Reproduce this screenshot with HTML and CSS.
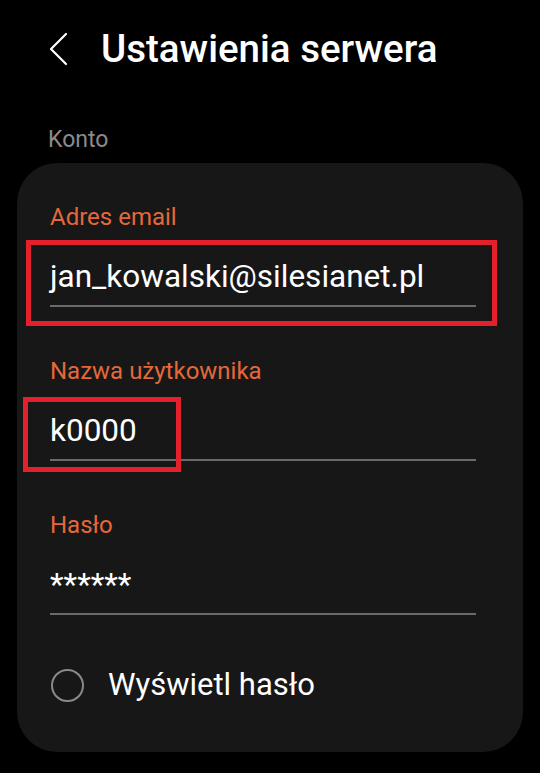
FILE: index.html
```html
<!DOCTYPE html>
<html lang="pl">
<head>
  <meta charset="UTF-8">
  <meta name="viewport" content="width=device-width, initial-scale=1.0">
  <title>Ustawienia serwera</title>
  <link rel="stylesheet" href="styles.css">
</head>
<body>
  <div class="screen">
    <!-- Pasek tytułu -->
    <div class="top-bar">
      <button class="back-button" aria-label="Wstecz">
        <svg width="20" height="34" viewBox="0 0 20 34">
          <path d="M17 2 L2 17 L17 32" fill="none" stroke="#fff" stroke-width="2.2" stroke-linecap="round" stroke-linejoin="round"/>
        </svg>
      </button>
      <h1>Ustawienia serwera</h1>
    </div>

    <div class="section-title">Konto</div>

    <div class="card">
      <div class="field">
        <label class="field-label">Adres email</label>
        <div class="field-value">
          jan_kowalski@silesianet.pl
          <span class="highlight highlight-email"></span>
        </div>
      </div>

      <div class="field">
        <label class="field-label">Nazwa użytkownika</label>
        <div class="field-value">
          k0000
          <span class="highlight highlight-user"></span>
        </div>
      </div>

      <div class="field">
        <label class="field-label">Hasło</label>
        <div class="field-value">******</div>
      </div>

      <div class="toggle-row">
        <span class="radio"></span>
        <span class="toggle-text">Wyświetl hasło</span>
      </div>
    </div>
  </div>
</body>
</html>
```

FILE: styles.css
```css
body {
  margin: 0;
  background-color: #000;
  color: #fff;
  font-family: 'Roboto', 'Noto Sans', sans-serif;
}

.screen {
  width: 540px;
  height: 773px;
  overflow: hidden;
}

.top-bar {
  display: flex;
  align-items: center;
  padding: 26px 0 0 49px;
  height: 46px;
}

.back-button {
  display: flex;
  align-items: center;
  padding: 0;
  margin: 0 32px 0 0;
  border: none;
  background: none;
}

h1 {
  margin: 0;
  font-size: 38.5px;
  font-weight: 500;
  line-height: 46px;
}

.section-title {
  margin: 54px 0 9px 48px;
  font-size: 23px;
  line-height: 28px;
  color: #8b8b8b;
}

.card {
  margin: 0 17px;
  height: 589px;
  box-sizing: border-box;
  padding: 40px 47px 0 33px;
  background-color: #171717;
  border-radius: 40px;
}

.field {
  display: flex;
  flex-direction: column;
  margin-bottom: 50px;
}

.field-label {
  font-size: 24px;
  line-height: 28px;
  color: #e4683b;
}

.field-value {
  position: relative;
  margin-top: 26px;
  padding-bottom: 8px;
  font-size: 31.5px;
  line-height: 40px;
  border-bottom: 2px solid #6a6a6a;
}

/* Czerwone ramki zaznaczenia */
.highlight {
  position: absolute;
  border: 5px solid #e3202b;
  box-sizing: border-box;
}

.highlight-email {
  left: -24px;
  top: -17px;
  width: 471px;
  height: 86px;
}

.highlight-user {
  left: -27px;
  top: -14px;
  width: 158px;
  height: 75px;
}

.toggle-row {
  display: flex;
  align-items: center;
  margin-top: 8px;
}

.radio {
  width: 33px;
  height: 33px;
  box-sizing: border-box;
  margin-left: 1px;
  border: 2.5px solid #8a8a8a;
  border-radius: 50%;
}

.toggle-text {
  margin-left: 24px;
  font-size: 31px;
  line-height: 40px;
}
```
